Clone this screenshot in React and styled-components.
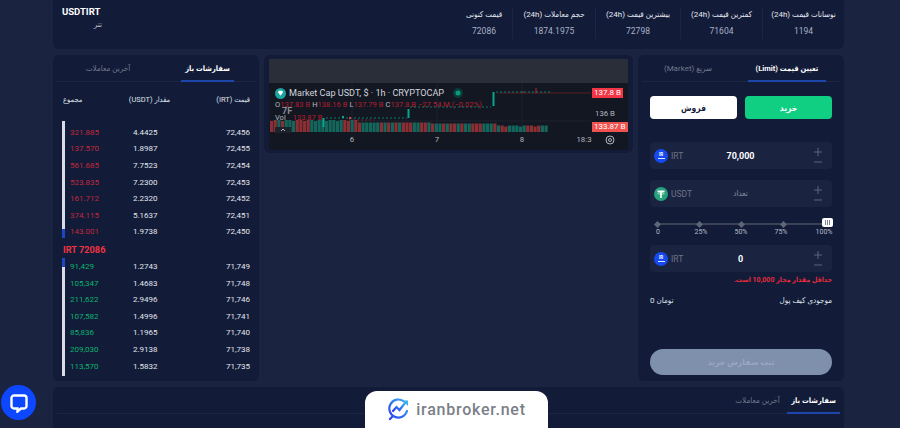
import React from "react";
import styled, { createGlobalStyle } from "styled-components";

const Global = createGlobalStyle`
  html, body { margin: 0; padding: 0; height: 428px; overflow: hidden; background: #1a2340; }
  body { font-family: Roboto, "DejaVu Sans Condensed", "DejaVu Sans", sans-serif; color: #fff; }
  * { box-sizing: border-box; }
`;

const Page = styled.div`
  width: 900px; height: 428px; overflow: hidden; position: relative;
  padding: 0 56px 0 53px; display: flex; flex-direction: column; gap: 6px; background: #1a2340;
`;
const Panel = styled.section`
  background: #121b38; border-radius: 6px; position: relative;
`;
const TopBar = styled(Panel)`
  height: 49px; flex: none; display: flex; justify-content: space-between;
  border-radius: 0 0 6px 6px; padding: 6px 0 0 9px;
`;
const Pair = styled.div`
  display: flex; flex-direction: column; width: 40px; gap: 1px;
`;
const Symbol = styled.div`font-size: 9.5px; font-weight: 700; line-height: 12px;`;
const Fa = styled.div`font-size: 8px; color: #b8bfcf; text-align: right; line-height: 11px;`;
const Stats = styled.div`display: flex; padding-top: 2px; height: 37px;`;
const Stat = styled.div`
  width: ${p => p.$w}px; display: flex; flex-direction: column; align-items: center; gap: 4px;
  border-left: ${p => (p.$first ? "none" : "1px solid #1c2543")};
  height: 31px; padding-top: 1px;
`;
const StatLabel = styled.div`font-size: 8px; line-height: 12px; color: #e6e9f0; white-space: nowrap; direction: rtl;`;
const StatValue = styled.div`font-size: 8.5px; line-height: 12px; color: #a9b1c4;`;

const Grid = styled.div`
  display: grid; grid-template-columns: 206px 1fr 206px; gap: 5px; align-items: start; flex: none;
`;
const TabRow = styled.div`
  display: flex; justify-content: space-between; height: 27px; margin: 0 4px; border-bottom: 1px solid #1c2543;
`;
const Tab = styled.div`
  width: ${p => p.$w}px; margin: 0 ${p => p.$mr || 0}px 0 ${p => p.$ml || 0}px;
  display: flex; align-items: center; justify-content: center; height: 27px; padding-top: 2px; flex: none;
  font-size: ${p => (p.$active ? "7.5px" : "8px")}; font-weight: ${p => (p.$active ? 700 : 400)}; direction: rtl; white-space: nowrap;
  color: ${p => (p.$active ? "#fff" : "#71788c")};
  border-bottom: 2px solid ${p => (p.$active ? "#1c46ac" : "transparent")};
`;
const OrdersPanel = styled(Panel)`height: 326px;`;
const OrdersHead = styled.div`
  display: grid; grid-template-columns: 54px 65px 1fr; padding: 12px 9px 0 10px; font-size: 7.5px;
  line-height: 12px; color: #dfe2ea; height: 39px; direction: ltr;
`;
const HeadTotal = styled.div`direction: rtl; text-align: left;`;
const HeadMid = styled.div`direction: rtl; text-align: center; white-space: nowrap;`;
const HeadPrice = styled.div`direction: rtl; text-align: right;`;
const Book = styled.div`position: relative; padding: ${p => p.$pt || 0}px 9px 0 17px;`;
const Row = styled.div`
  display: grid; grid-template-columns: 63px 65px 1fr; height: 16.6px; align-items: center; font-size: 8px;
`;
const Total = styled.div`color: ${p => (p.$up ? "#0bb36e" : "#c02a3d")};`;
const Amount = styled.div`color: #e3e6ee;`;
const Price = styled.div`color: #e3e6ee; text-align: right;`;
const Depth = styled.div`
  position: absolute; left: 9px; top: 0; width: 3px; height: ${p => p.$h}px;
  background: #d9dce6; overflow: hidden;
`;
const DepthFill = styled.div`
  position: absolute; left: 0; width: 100%; height: 9px; background: #1c46c4;
  ${p => (p.$end ? "bottom: 0;" : "top: 0;")}
`;
const MidPrice = styled.div`
  color: #ee3442; font-size: 9.2px; font-weight: 700; padding: 0 0 0 10px; height: 18px;
  display: flex; align-items: center;
`;

const ChartPanel = styled(Panel)`height: 98px; padding: 4px 5px;`;
const ChartFrame = styled.div`
  height: 91px; background: #131722; position: relative; overflow: hidden;
`;
const ChartBand = styled.div`height: 24px; background: #2a2e39;`;
const ChartSvg = styled.svg`position: absolute; left: 0; top: 0;`;
const Legend = styled.div`
  position: absolute; left: 6px; top: 28px; display: flex; align-items: center; gap: 2px;
  font-family: Roboto, sans-serif; font-size: 9.1px; line-height: 12px; color: #d1d4dc; white-space: nowrap;
`;
const LegendIcon = styled.svg`flex: none; margin-right: 1px;`;
const Ohlc = styled.div`
  position: absolute; left: 6px; top: 42px; font-family: Roboto, sans-serif; font-size: 7.5px; line-height: 8px;
  color: #b2202e; white-space: nowrap; letter-spacing: .05px;
`;
const OhlcKey = styled.span`color: #b4b7c0;`;
const Vol = styled.div`
  position: absolute; left: 6px; top: 55px; font-family: Roboto, sans-serif; font-size: 7.5px; line-height: 8px;
  color: #b2202e; white-space: nowrap;
`;
const VolValue = styled.span`margin-left: 7px;`;
const Ghost = styled.div`
  position: absolute; left: 13px; top: 50px; font-family: Roboto, sans-serif; font-size: 9px; line-height: 5px;
  color: #8b8e98; font-weight: 700;
`;
const PriceTag = styled.div`
  position: absolute; left: ${p => p.$x}px; top: ${p => p.$y}px; height: 10px; padding: 0 2px;
  background: ${p => p.$c}; font-family: Roboto, sans-serif; font-size: 8px; line-height: 10px; color: #fff;
`;
const AxisText = styled.div`
  position: absolute; left: ${p => p.$x}px; top: ${p => p.$y}px; transform: translateX(-50%);
  font-family: Roboto, sans-serif; font-size: 7.8px; color: #b2b5be; white-space: nowrap;
`;

const FormPanel = styled(Panel)`height: 326px;`;
const FormBody = styled.div`padding: 14px 12px 0; display: flex; flex-direction: column;`;
const SideRow = styled.div`display: flex; justify-content: space-between; margin-bottom: 23px;`;
const SideBtn = styled.div`
  width: 87px; height: 23px; border-radius: 4px; background: ${p => p.$bg}; color: ${p => p.$fg};
  font-size: 8.5px; font-weight: 700; display: flex; align-items: center; justify-content: center;
`;
const Field = styled.div`
  height: 27px; background: #1a2340; border-radius: 4px; display: flex; align-items: center;
  padding: 0 10px 0 4px; margin-bottom: ${p => p.$mb || 0}px;
`;
const Coin = styled.div`
  width: 14px; height: 14px; border-radius: 50%; background: ${p => p.$bg}; flex: none;
  display: flex; flex-direction: column; align-items: center; justify-content: center; color: #fff;
  font-size: 4.5px; line-height: 4px; font-weight: 700;
`;
const CoinBar = styled.i`display: block; width: 7px; height: 1px; background: #dfe6ff; margin-top: 1px;`;
const CoinLabel = styled.div`font-size: 8.5px; color: #6d7488; margin-left: 3px; width: 20px;`;
const FieldValue = styled.div`
  flex: 1; text-align: center; font-size: ${p => (p.$muted ? "8px" : "9px")}; font-weight: ${p => (p.$muted ? 400 : 700)};
  color: ${p => (p.$muted ? "#8c93a5" : "#fff")}; padding-right: 24px; direction: rtl;
`;
const Steppers = styled.div`display: flex; flex-direction: column; gap: 4px; align-items: center; width: 8px;`;
const Slider = styled.div`height: 27px; position: relative;`;
const Track = styled.div`
  position: absolute; left: 7px; right: 4px; top: 5px; height: 2px; background: #3a4257;
`;
const Knob = styled.div`
  position: absolute; left: ${p => p.$x}px; top: 3.5px; width: 5px; height: 5px; background: #5d6576;
  transform: rotate(45deg);
`;
const Handle = styled.div`
  position: absolute; right: -1px; top: 0; width: 11px; height: 9px; background: #fff; border-radius: 2px;
  display: flex; gap: 1px; align-items: center; justify-content: center;
`;
const Grip = styled.i`display: block; width: 1px; height: 5px; background: #7d8494;`;
const Tick = styled.div`
  position: absolute; left: ${p => p.$x}px; top: 10px; transform: translateX(-50%); font-size: 7px; color: #b6bccb; line-height: 9px;
`;
const ErrorText = styled.div`
  direction: rtl; color: #e22c3c; font-size: 7px; font-weight: 700; margin-top: 2px; height: 11px; line-height: 11px; padding-top: 1px;
`;
const Wallet = styled.div`
  display: flex; justify-content: space-between; font-size: 8px; color: #dfe2ea; margin-top: 10px; height: 12px; line-height: 12px; direction: rtl;
`;
const Submit = styled.div`
  margin-top: 42px; height: 26px; border-radius: 13px; background: #7f90ad; color: #9aa7bf;
  display: flex; align-items: center; justify-content: center; font-size: 8.5px; font-weight: 700; direction: rtl;
`;
const BottomPanel = styled(Panel)`height: 60px; flex: none;`;
const BottomTabs = styled.div`
  display: flex; justify-content: flex-end; height: 27px; margin: 0 4px; border-bottom: 1px solid #1c2543;
`;

const Chat = styled.div`
  position: absolute; left: 1px; top: 385px; width: 35px; height: 35px; border-radius: 50%; background: #0d47ff;
  display: flex; align-items: center; justify-content: center;
`;
const Brand = styled.div`
  position: absolute; left: 365px; top: 391px; width: 183px; height: 37px; background: #fff;
  border-radius: 12px 12px 0 0; display: flex; align-items: center; justify-content: center; gap: 6px;
  color: #7b7f88; font-family: Roboto, sans-serif; font-size: 16px; font-weight: 500; letter-spacing: .75px;
`;

const asks = [["321.885","4.4425","72,456"],["137.570","1.8987","72,455"],["561.685","7.7523","72,454"],["523.835","7.2300","72,453"],["161.712","2.2320","72,452"],["374.115","5.1637","72,451"],["143.001","1.9738","72,450"]];
const bids = [["91,429","1.2743","71,749"],["105,347","1.4683","71,748"],["211,622","2.9496","71,746"],["107,582","1.4996","71,741"],["85,836","1.1965","71,740"],["209,030","2.9138","71,738"],["113,570","1.5832","71,735"]];
const stats = [["قیمت کنونی","72086",56],["حجم معاملات (24h)","1874.1975",83],["بیشترین قیمت (24h)","72798",85],["کمترین قیمت (24h)","71604",82],["نوسانات قیمت (24h)","1194",82]];

const volPattern = "rrgrgggrrrrgggggggggrrgrrgggggrgrgrgrrrggrrgrggrgrrgrggrrrgggrgrrgggggrrrrgg".split("");

function Volume() {
  return volPattern.map((c, i) => {
    const x = 1 + i * 3.66;
    const h = i < 24 ? 12 - (i % 3 === 0 ? 1 : 0) : i < 44 ? 9.5 : i < 62 ? 8.5 : 6.5 - (i % 4 === 0 ? 1 : 0);
    return <rect key={i} x={x} y={73 - h} width={3.2} height={h} fill={c === "r" ? "#8a2f33" : "#14665c"} />;
  });
}

function Chart() {
  return (
    <ChartFrame>
      <ChartBand />
      <ChartSvg width="359" height="91" viewBox="0 0 359 91">
        <path d="M83 24V73M168 24V73M253 24V73M0 62H322" stroke="#1e222d" strokeWidth="1" />
        <path d="M230 34H322" stroke="#5a1c25" strokeWidth="1" />
        <Volume />
        <rect x="53.500" y="59" width="2" height="9" fill="#0aa58c" />
        <rect x="138.500" y="50" width="2" height="9" fill="#0aa58c" />
        <rect x="223.500" y="33" width="2" height="14" fill="#0aa58c" />
        <path d="M57 59H138M141 48H222M227 33H282" stroke="#0d7c6c" strokeWidth="1" strokeDasharray="2 2" fill="none" />
        <path d="M80 61H105" stroke="#7a2430" strokeWidth="1" strokeDasharray="2 2" />
        <rect x="73" y="57" width="2" height="2" fill="#14a58d" />
        <rect x="80" y="58" width="2" height="2" fill="#e03a4a" />
        <path d="M254 32V34M267 29V34" stroke="#b02a37" strokeWidth="1" />
        <circle cx="189" cy="34" r="5" fill="#0b3b36" />
        <circle cx="189" cy="34" r="2.500" fill="#089981" />
        <rect x="6" y="68" width="16" height="6" fill="#1e222d" />
        <path d="M12 72l2-2 2 2" stroke="#b2b5be" strokeWidth="1" fill="none" />
        <circle cx="341" cy="81" r="4" fill="none" stroke="#b2b5be" strokeWidth="1" />
        <circle cx="341" cy="81" r="1.500" fill="none" stroke="#b2b5be" strokeWidth="1" />
      </ChartSvg>
      <Legend>
        <LegendIcon width="11" height="11" viewBox="0 0 11 11">
          <circle cx="5.500" cy="5.500" r="5.500" fill="#1ba39c" />
          <path d="M2.800 4l1.200-1.200h3L8.200 4 5.500 7.800z" fill="#fff" />
        </LegendIcon>
        Market Cap USDT, $ · 1h · CRYPTOCAP
      </Legend>
      <Ohlc>
        <OhlcKey>O</OhlcKey>137.83 B <OhlcKey>H</OhlcKey>138.16 B <OhlcKey>L</OhlcKey>137.79 B <OhlcKey>C</OhlcKey>137.8 B −27.54 M (−0.02%)
      </Ohlc>
      <Ghost>7F</Ghost>
      <Vol><OhlcKey>Vol</OhlcKey><VolValue>133.87 B</VolValue></Vol>
      <PriceTag $x={323} $y={29} $c="#f23645">137.8 B</PriceTag>
      <PriceTag $x={323} $y={63} $c="#ef5350">133.87 B</PriceTag>
      <AxisText $x={336} $y={50}>136 B</AxisText>
      <AxisText $x={83} $y={76}>6</AxisText>
      <AxisText $x={168} $y={76}>7</AxisText>
      <AxisText $x={253} $y={76}>8</AxisText>
      <AxisText $x={315} $y={76}>18:3</AxisText>
    </ChartFrame>
  );
}

function IrtCoin() {
  return <Coin $bg="#1749f0">IR<CoinBar /></Coin>;
}
function UsdtCoin() {
  return (
    <Coin $bg="#26a17b">
      <svg width="10" height="10" viewBox="0 0 10 10"><path d="M1.500 1.500h7v1.400H5.800V9H4.200V2.900H1.500z" fill="#fff" /><ellipse cx="5" cy="4.300" rx="3.400" ry=".8" fill="none" stroke="#fff" strokeWidth=".6" /></svg>
    </Coin>
  );
}
function Step() {
  return (
    <Steppers>
      <svg width="8" height="8" viewBox="0 0 8 8"><path d="M4 0v8M0 4h8" stroke="#5e6578" strokeWidth="1" /></svg>
      <svg width="8" height="4" viewBox="0 0 8 4"><path d="M0 2h8" stroke="#5e6578" strokeWidth="1" /></svg>
    </Steppers>
  );
}

export default function App() {
  return (
    <Page>
      <Global />
      <TopBar>
        <Pair><Symbol>USDTIRT</Symbol><Fa>تتر</Fa></Pair>
        <Stats>
          {stats.map(([l, v, w], i) => (
            <Stat key={l} $w={w} $first={i === 0}><StatLabel>{l}</StatLabel><StatValue>{v}</StatValue></Stat>
          ))}
        </Stats>
      </TopBar>
      <Grid>
        <OrdersPanel>
          <TabRow>
            <Tab $w={100} $ml={1}>آخرین معاملات</Tab>
            <Tab $w={53} $mr={21} $active>سفارشات باز</Tab>
          </TabRow>
          <OrdersHead>
            <HeadTotal>مجموع</HeadTotal><HeadMid>مقدار (USDT)</HeadMid><HeadPrice>قیمت (IRT)</HeadPrice>
          </OrdersHead>
          <Book $pt={3}>
            <Depth $h={117}><DepthFill $end /></Depth>
            {asks.map(r => <Row key={r[2]}><Total>{r[0]}</Total><Amount>{r[1]}</Amount><Price>{r[2]}</Price></Row>)}
          </Book>
          <MidPrice>IRT 72086</MidPrice>
          <Book>
            <Depth $h={118}><DepthFill /></Depth>
            {bids.map(r => <Row key={r[2]}><Total $up>{r[0]}</Total><Amount>{r[1]}</Amount><Price>{r[2]}</Price></Row>)}
          </Book>
        </OrdersPanel>
        <ChartPanel><Chart /></ChartPanel>
        <FormPanel>
          <TabRow>
            <Tab $w={80} $ml={6}>سریع (Market)</Tab>
            <Tab $w={78} $mr={14} $active>تعیین قیمت (Limit)</Tab>
          </TabRow>
          <FormBody>
            <SideRow>
              <SideBtn $bg="#fff" $fg="#121b38">فروش</SideBtn>
              <SideBtn $bg="#10cf83" $fg="#fff">خرید</SideBtn>
            </SideRow>
            <Field $mb={11}><IrtCoin /><CoinLabel>IRT</CoinLabel><FieldValue>70,000</FieldValue><Step /></Field>
            <Field $mb={11}><UsdtCoin /><CoinLabel>USDT</CoinLabel><FieldValue $muted>تعداد</FieldValue><Step /></Field>
            <Slider>
              <Track />
              <Knob $x={4.5} /><Knob $x={46.5} /><Knob $x={88.5} /><Knob $x={130.5} />
              <Handle><Grip /><Grip /><Grip /></Handle>
              <Tick $x={8}>0</Tick><Tick $x={51}>25%</Tick><Tick $x={91}>50%</Tick><Tick $x={131}>75%</Tick><Tick $x={174}>100%</Tick>
            </Slider>
            <Field><IrtCoin /><CoinLabel>IRT</CoinLabel><FieldValue>0</FieldValue><Step /></Field>
            <ErrorText>حداقل مقدار مجاز 10,000 است.</ErrorText>
            <Wallet><span>موجودی کیف پول</span><span>تومان 0</span></Wallet>
            <Submit>ثبت سفارش خرید</Submit>
          </FormBody>
        </FormPanel>
      </Grid>
      <BottomPanel>
        <BottomTabs>
          <Tab $w={59}>آخرین معاملات</Tab>
          <Tab $w={53} $active>سفارشات باز</Tab>
        </BottomTabs>
      </BottomPanel>
      <Chat>
        <svg width="20" height="20" viewBox="0 0 20 20">
          <path d="M5 2.500h10A2.500 2.500 0 0 1 17.500 5v8A2.500 2.500 0 0 1 15 15.500h-3L8.500 18.500v-3H5A2.500 2.500 0 0 1 2.500 13V5A2.500 2.500 0 0 1 5 2.500z" fill="none" stroke="#fff" strokeWidth="2.400" />
        </svg>
      </Chat>
      <Brand>
        <svg width="23" height="23" viewBox="0 0 23 23">
          <defs><linearGradient id="lg" x1="0" y1="1" x2="1" y2="0"><stop offset="0" stopColor="#2a3cf0" /><stop offset="1" stopColor="#3bb0f5" /></linearGradient></defs>
          <path d="M17 3.500A9 9 0 1 0 20 13M3 21l3-3" fill="none" stroke="url(#lg)" strokeWidth="2.200" strokeLinecap="round" />
          <path d="M6 13l3.500-4 3 3 5.500-7" fill="none" stroke="url(#lg)" strokeWidth="2.200" strokeLinecap="round" />
          <path d="M15.500 2.500h5.500v5.500z" fill="#3bb0f5" />
        </svg>
        iranbroker.net
      </Brand>
    </Page>
  );
}
